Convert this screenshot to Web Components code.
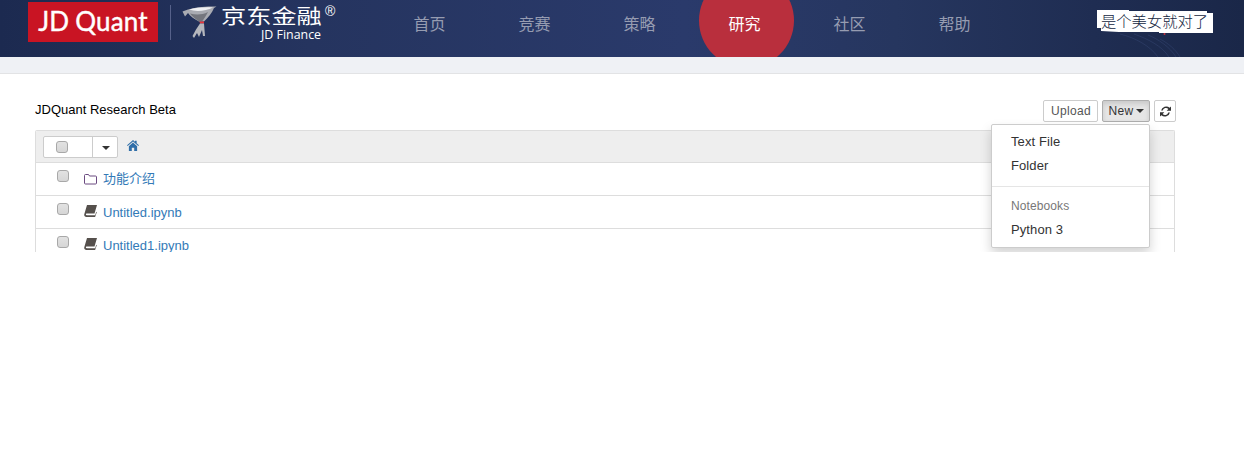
<!DOCTYPE html>
<html lang="zh">
<head>
<meta charset="utf-8">
<title>JDQuant Research</title>
<style>
  html, body { margin: 0; background: #fff; }
  body { font-family: "Liberation Sans", Arial, sans-serif; font-size: 13px; color: #000; }
</style>
</head>
<body>
<jd-header>
  <nav-item>首页</nav-item>
  <nav-item>竞赛</nav-item>
  <nav-item>策略</nav-item>
  <nav-item active>研究</nav-item>
  <nav-item>社区</nav-item>
  <nav-item>帮助</nav-item>
</jd-header>
<sub-bar></sub-bar>
<research-page>
  <tree-row kind="folder" name="功能介绍"></tree-row>
  <tree-row kind="notebook" name="Untitled.ipynb"></tree-row>
  <tree-row kind="notebook" name="Untitled1.ipynb"></tree-row>
</research-page>

<script>
const cjk = `"Liberation Sans", "Noto Sans CJK SC", sans-serif`;

class JdHeader extends HTMLElement {
    constructor() {
        super();
        this.attachShadow({ mode: 'open' });
        this.shadowRoot.innerHTML = `
        <style>
          :host { display: flex; height: 57px; padding-left: 28px; box-sizing: border-box; overflow: hidden; position: relative;
            background: linear-gradient(90deg, #1c2a50 0, #25345f 25%, #2a3a6b 55%, #26365f 72%, #1f2d52 88%, #1a2748 100%); }
          .logo { width: 130px; height: 40px; margin-top: 2px; background: #c91423; color: #fff; -webkit-text-stroke: .4px #fff;
            font: 400 26px/39px Lato, sans-serif; text-align: center; white-space: nowrap; word-spacing: -1px; letter-spacing: .2px; }
          .sep { width: 1px; height: 35px; margin: 5px 10px 0 12px; background: #56618a; }
          .fish { width: 40px; height: 40px; flex: none; }
          .brand { width: 156px; position: relative; color: #fff; flex: none; }
          .cn { display: block; font: 400 20px/20px "Noto Sans CJK SC", sans-serif; margin: 6px 0 0 0; white-space: nowrap;
            transform: scaleX(1.26); transform-origin: left top; }
          .reg { position: absolute; left: 104px; top: 3px; font: 14px/16px "Liberation Sans", sans-serif; }
          .en { position: absolute; left: 40px; top: 27px; font: 12.4px/15px "Open Sans", sans-serif; white-space: nowrap; }
          nav { display: flex; flex: none; position: relative; }
          .user { margin-left: auto; margin-right: 31px; margin-top: 10px; height: 23px; width: 116px; box-sizing: border-box;
            padding-left: 4px; background: #fff; color: #111d40; white-space: nowrap;
            font: 300 15.3px/21px "Noto Sans CJK SC", sans-serif;
            clip-path: polygon(0 0, 32px 0, 32px 1px, 110px 1px, 110px 3px, 100% 3px, 100% 100%, 62px 100%, 62px 22px, 22px 22px, 4px 21px, 4px 18px, 0 18px); }
          .streaks { position: absolute; left: 1120px; top: 28px; width: 70px; height: 29px; }
        </style>
        <div class="logo">JD Quant</div>
        <div class="sep"></div>
        <svg class="fish" viewBox="0 0 40 40">
          <path d="M1.500 11.500L7 9.500C14 7 26 6 35.500 6.500L33 8C31 13 27 18 23 21.500H18C13 19 9 16 7 13L4 16.500z" fill="#a9abb2"/>
          <path d="M8 9.500C15 7.500 24 7 32 7.500 25 11 15 12 8 9.500z" fill="#eff0f3"/>
          <path d="M18 21.500C14 19 11 16 9 13.500 15 15 21 15 27 12 25 16 23 19 21 21.500z" fill="#74767e"/>
          <path d="M18.500 21.500H23V23.500H19z" fill="#e8343c"/>
          <path d="M19 23.500h4l1 12.500h-2l-1-6-3 7-2-4-3 5-1.500-2L15 29.500z" fill="#b5b7bd"/>
        </svg>
        <div class="brand">
          <span class="cn">京东金融</span><span class="reg">®</span><span class="en">JD Finance</span>
        </div>
        <nav><slot></slot></nav>
        <div class="user">是个美女就对了</div>
        <svg class="streaks" viewBox="0 0 70 29" fill="none" stroke="#33436f" stroke-opacity=".55">
          <path d="M0 6C16 10 30 18 38 29M14 6C28 11 42 18 49 29M28 7C38 11 50 19 56 29M40 11C48 15 56 22 60 29"/>
          <circle cx="44.500" cy="6" r="1" fill="#c8323c" stroke="none"/>
        </svg>`;
    }
}

class NavItem extends HTMLElement {
    constructor() {
        super();
        this.attachShadow({ mode: 'open' });
        this.shadowRoot.innerHTML = `
        <style>
          :host { display: block; width: 105px; height: 57px; position: relative; text-align: center;
            font: 16px/47px "Noto Sans CJK SC", sans-serif; color: #969cb1; }
          :host([active]) { color: #fff; }
          :host([active])::before { content: ""; position: absolute; left: 7px; top: -27px; width: 95px; height: 95px;
            border-radius: 50%; background: #b92f3d; }
          span { position: relative; }
        </style>
        <span><slot></slot></span>`;
    }
}

class SubBar extends HTMLElement {
    constructor() {
        super();
        this.attachShadow({ mode: 'open' });
        this.shadowRoot.innerHTML = `
        <style>
          :host { display: block; height: 17px; box-sizing: border-box; background: #eff1f5; border-bottom: 1px solid #e2e3e5; }
        </style>`;
    }
}

class ResearchPage extends HTMLElement {
    constructor() {
        super();
        this.attachShadow({ mode: 'open' });
        this.shadowRoot.innerHTML = `
        <style>
          :host { display: block; padding: 26px 69px 0 35px; height: 178px; box-sizing: border-box; position: relative; font: 13px/18px ${cjk}; }
          .top { display: flex; align-items: center; height: 22px; margin-bottom: 8px; margin-right: -1px; }
          .title { color: #000; margin-top: -2px; }
          .actions { margin-left: auto; display: flex; gap: 4px; }
          button { font: 12px/18px "Liberation Sans", sans-serif; letter-spacing: .3px; color: #555; background: #fff; border: 1px solid #ccc; border-radius: 2px;
            height: 22px; width: 55px; padding: 0 0 0 1px; box-sizing: border-box; display: flex; align-items: center; justify-content: center; }
          button.open { width: 48px; color: #333; background: #e6e6e6; border-color: #adadad; box-shadow: inset 0 3px 5px rgba(0,0,0,.125); }
          button.icon { width: 22px; padding: 0; }
          .caret { display: inline-block; border: 4px solid transparent; border-top-color: currentColor; border-bottom: 0; margin-left: 3px; }
          .panel { height: 122px; overflow: hidden; border: 1px solid #ddd; border-bottom: 0; border-radius: 2px 2px 0 0; box-sizing: border-box; }
          .head { display: flex; align-items: center; height: 32px; box-sizing: border-box; background: #eee; border-bottom: 1px solid #ddd; padding-left: 7px; }
          .select { display: flex; width: 75px; height: 22px; box-sizing: border-box; background: #fff; border: 1px solid #ccc; border-radius: 2px; }
          .select div { display: flex; align-items: center; justify-content: center; }
          .select .l { width: 49px; border-right: 1px solid #ccc; padding-right: 12px; box-sizing: border-box; }
          .select .r { flex: 1; color: #333; }
          .select .caret { margin: 2px 0 0 1px; }
          .home { margin: -3px 0 0 9px; width: 12px; height: 11px; fill: #2f6ea8; }
          drop-menu { position: absolute; left: 991px; top: 50px; }
        </style>
        <div class="top">
          <span class="title">JDQuant Research Beta</span>
          <div class="actions">
            <button>Upload</button>
            <button class="open">New<span class="caret"></span></button>
            <button class="icon"><svg width="11" height="11" viewBox="0 0 12 12" fill="#333"><path d="M12 .5v4.700H7.300l1.800-1.800A3.500 3.500 0 0 0 3 5H1.200A5.600 5.600 0 0 1 10.500 2zM0 11.500V6.800h4.700L2.900 8.600A3.500 3.500 0 0 0 9 7h1.800A5.600 5.600 0 0 1 1.500 10z"/></svg></button>
          </div>
        </div>
        <div class="panel">
          <div class="head">
            <div class="select"><div class="l"><check-box></check-box></div><div class="r"><span class="caret"></span></div></div>
            <svg class="home" viewBox="0 0 13 12"><path d="M6.500 0l2.200 1.900V.8h1.800v2.700L13 5.700l-.7.8-5.800-5-5.800 5L0 5.700zM2 6.700l4.500-3.900L11 6.700V12H7.800V8.500H5.200V12H2z"/></svg>
          </div>
          <slot></slot>
        </div>
        <drop-menu></drop-menu>`;
    }
}

class CheckBox extends HTMLElement {
    constructor() {
        super();
        this.attachShadow({ mode: 'open' });
        this.shadowRoot.innerHTML = `
        <style>
          :host { display: block; width: 12px; height: 12px; }
          input { appearance: none; display: block; margin: 0; width: 12px; height: 12px; box-sizing: border-box;
            border: 1px solid #a8a8a8; border-radius: 3px; background: linear-gradient(#e2e2e2, #d6d6d6); }
        </style>
        <input type="checkbox">`;
    }
}

class TreeRow extends HTMLElement {
    constructor() {
        super();
        this.attachShadow({ mode: 'open' });
        const folder = `<svg class="ic" viewBox="0 0 13 12" fill="none" stroke="#6b4a80" stroke-width="1"><path d="M.5 2.500A1 1 0 0 1 1.500 1.500h3l1 1.500h6a1 1 0 0 1 1 1v6a1 1 0 0 1-1 1h-10a1 1 0 0 1-1-1z"/></svg>`;
        const book = `<svg class="ic" viewBox="0 0 13 12"><path d="M3 0h10l-2.500 8.500H3c-.8 0-1.200.5-1.100 1 .1.400.4.800 1 .8h8.300l1-3.600.6.600L11.100 12H2.500C1 12 0 11 .2 9.500z" fill="#55504c"/></svg>`;
        const isFolder = this.getAttribute('kind') === 'folder';
        this.shadowRoot.innerHTML = `
        <style>
          :host { display: flex; align-items: flex-start; height: 33px; box-sizing: border-box; border-bottom: 1px solid #ddd; font: 13px/18px ${cjk}; color: #337ab7; }
          check-box { margin: 7px 0 0 21px; }
          .ic { width: 13px; height: 12px; margin: ${isFolder ? 10 : 9}px 0 0 15px; flex: none; }
          .name { margin: ${isFolder ? 7 : 8}px 0 0 6px; }
        </style>
        <check-box></check-box>${isFolder ? folder : book}
        <span class="name">${this.getAttribute('name')}</span>`;
    }
}

class DropMenu extends HTMLElement {
    constructor() {
        super();
        this.attachShadow({ mode: 'open' });
        this.shadowRoot.innerHTML = `
        <style>
          :host { display: block; width: 159px; height: 124px; box-sizing: border-box; background: #fff; border: 1px solid #ccc; border-radius: 2px;
            box-shadow: 0 6px 12px rgba(0,0,0,.175); font: 13px/18px "Liberation Sans", sans-serif; color: #333; letter-spacing: .1px; }
          .item { padding: 0 19px; height: 24px; line-height: 24px; }
          .first { margin-top: 5px; }
          hr { border: 0; height: 1px; background: #e5e5e5; margin: 8px 0 7px; }
          .label { padding: 0 19px; height: 24px; line-height: 24px; font-size: 12px; color: #777; }
        </style>
        <div class="item first">Text File</div>
        <div class="item">Folder</div>
        <hr>
        <div class="label">Notebooks</div>
        <div class="item">Python 3</div>`;
    }
}

customElements.define('check-box', CheckBox);
customElements.define('nav-item', NavItem);
customElements.define('sub-bar', SubBar);
customElements.define('drop-menu', DropMenu);
customElements.define('tree-row', TreeRow);
customElements.define('jd-header', JdHeader);
customElements.define('research-page', ResearchPage);
</script>
</body>
</html>
